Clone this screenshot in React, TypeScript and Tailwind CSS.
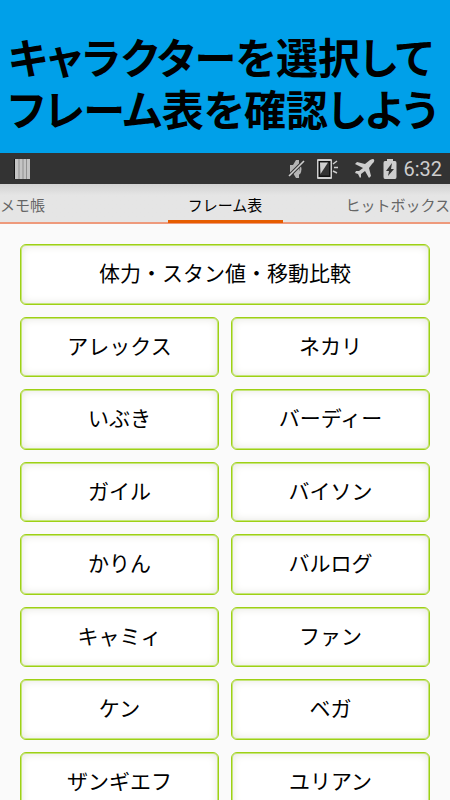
import React from "react";

const characters = [
  "アレックス", "ネカリ",
  "いぶき", "バーディー",
  "ガイル", "バイソン",
  "かりん", "バルログ",
  "キャミィ", "ファン",
  "ケン", "ベガ",
  "ザンギエフ", "ユリアン",
];

function FrameButton({ label, wide = false }: { label: string; wide?: boolean }) {
  return (
    <button
      type="button"
      className={`rounded-md border border-[#9ed015] bg-white px-2 py-4 text-[21px] leading-6 text-black shadow-[inset_0_0_0_1px_#c5e57a,inset_0_0_10px_#e2e2da] ${wide ? "col-span-2" : ""}`}
    >
      {label}
    </button>
  );
}

function StatusBar() {
  return (
    <div className="flex h-[31px] shrink-0 items-center justify-between bg-[#333333] px-2 text-[#cecece]">
      <svg className="ml-[6px]" width="16" height="20" viewBox="0 0 16 20" aria-hidden="true">
        <path d="M1 0H16V20H1Z" fill="#c4c4c4" />
        <path d="M5 0V20M9 0V20M12.5 0V20" stroke="#909090" strokeWidth="1" />
        <path d="M0.5 0V20" stroke="#111" />
      </svg>
      <div className="flex items-center">
        <svg className="mr-3" width="18" height="22" viewBox="0 0 18 22" aria-hidden="true">
          <path d="M3 7H6L9 2H12V20H9L6 15H3Z" fill="#b5b5b5" />
          <path d="M12 6Q15 11 12 16" fill="none" stroke="#b5b5b5" strokeWidth="2" />
          <path d="M2 18L17 3" stroke="#333" strokeWidth="3.5" />
          <path d="M2 18L17 3" stroke="#cecece" strokeWidth="1.6" />
        </svg>
        <svg className="mr-4" width="22" height="22" viewBox="0 0 22 22" aria-hidden="true">
          <rect x="0" y="1" width="15" height="20" rx="1" fill="#cecece" />
          <rect x="1.5" y="3" width="12" height="16" fill="#111" />
          <rect x="3" y="4.500" width="9" height="13" fill="#333" />
          <path d="M3 4.500H11L3.500 16Z" fill="#cecece" />
          <path d="M16 6L20 3M17 9.500H21M16 13L20 15" stroke="#cecece" strokeWidth="1.5" />
        </svg>
        <svg className="mr-2" width="20" height="20" viewBox="0 0 20 20" fill="currentColor" aria-hidden="true">
          <path d="M0 5L2 3L10 5L15 1Q19 -1 19 1Q20 2 17 5L14 9L16 17L14 19L10 12L6 15V18L5 19L3 15L0 14L1 12H4L8 9Z" />
        </svg>
        <svg className="mr-1.5" width="14" height="20" viewBox="0 0 14 20" aria-hidden="true">
          <path d="M4 0H10V2H12Q13.500 2 13.500 4V18Q13.500 20 12 20H2Q.5 20 .5 18V4Q.5 2 2 2H4Z" fill="#cecece" />
          <path d="M9 4L3 12H6L5 17L11 10H8Z" fill="#333" />
        </svg>
        <time className="font-[Roboto,sans-serif] text-xl leading-6">6:32</time>
      </div>
    </div>
  );
}

export default function App() {
  return (
    <div
      lang="ja"
      className="flex h-screen flex-col overflow-hidden bg-[#fafafa] font-['Liberation_Sans','Noto_Sans_CJK_JP',sans-serif]"
    >
      <header className="shrink-0 bg-[#00a0e9] px-2 pt-[34px] pb-[15px]">
        <h1 className="text-[42px] leading-[52px] font-bold whitespace-nowrap text-black [font-feature-settings:'palt']">
          キャラクターを選択して
          <br />
          フレーム表を確認しよう
        </h1>
      </header>
      <StatusBar />
      <nav className="flex h-10 shrink-0 items-stretch justify-between border-b-2 border-[#ee9a7c] bg-linear-to-b from-[#d2d2d2] to-[#e5e5e5] to-30% text-[15px] leading-5 text-[#666666]">
        <button type="button" className="w-[115px] pt-[6px] text-left">メモ帳</button>
        <button type="button" aria-current="page" className="-mb-px w-[115px] border-b-3 border-[#e65c00] pt-2 text-black">
          フレーム表
        </button>
        <button type="button" className="w-[115px] pt-[6px] text-right">ヒットボックス</button>
      </nav>
      <main className="flex-1 overflow-y-auto px-5 pt-5 pb-3 [scrollbar-width:none]">
        <div className="grid min-h-[568px] grid-cols-2 gap-3">
          <FrameButton label="体力・スタン値・移動比較" wide />
          {characters.map((name) => (
            <FrameButton key={name} label={name} />
          ))}
        </div>
      </main>
    </div>
  );
}
